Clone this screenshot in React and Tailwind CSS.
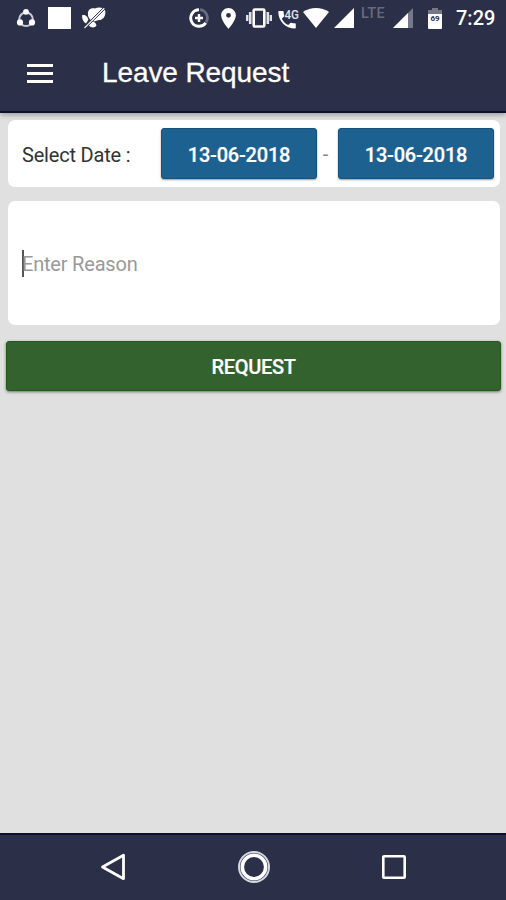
import React, { useState } from 'react';

const ShareIcon = () => (
  <svg className="ml-[16px] size-5 shrink-0" viewBox="0 0 20 20" fill="none">
    <circle cx="10" cy="11.3" r="6.800" stroke="#c9cad6" strokeWidth="2" />
    <circle cx="10" cy="3.800" r="2.900" fill="#fff" />
    <circle cx="4" cy="14.400" r="3.100" fill="#fff" />
    <circle cx="16" cy="14.400" r="3.100" fill="#fff" />
  </svg>
);

const SlashedLeafIcon = () => (
  <svg className="ml-[11px] h-[22px] w-[24px] shrink-0" viewBox="0 0 24 22" fill="none">
    <path d="M6 6C6 2.500 9.500 .5 13 1.500C16 -.2 22.500 .3 23.300 4C24 9 21 13 17 13L12 14.500C8 13.500 5.500 10 6 6Z" fill="#fff" />
    <path d="M0 8.500C2.500 7 6 9.500 6.300 13L4 16.500C1.500 15 0 12.500 0 8.500Z" fill="#fff" />
    <path d="M8 16C10.500 13.500 14 15 14.500 18.500C13 21 9.500 21 7 18.800Z" fill="#fff" />
    <path d="M2 20L21 1M3.800 21L23 2" stroke="#2b2f48" strokeWidth="1" />
    <path d="M2.500 21L22.300 1.200" stroke="#e4e4ea" strokeWidth="1.300" />
  </svg>
);

const DataSaverIcon = () => (
  <svg className="ml-auto size-5 shrink-0" viewBox="0 0 20 20" fill="none">
    <path d="M11 1.700A8.300 8.300 0 0 1 17.200 14.200" stroke="#6b6d80" strokeWidth="2.800" />
    <path d="M10 1.700A8.300 8.300 0 1 0 16.800 14.800" stroke="#fff" strokeWidth="2.900" />
    <path d="M10 6V14M6 10H14" stroke="#fff" strokeWidth="2.500" />
  </svg>
);

const PinIcon = () => (
  <svg className="ml-[12px] h-[21px] w-[15px] shrink-0" viewBox="0 0 14 20" fill="#fff">
    <path fillRule="evenodd" d="M7 0C3.130 0 0 3.130 0 7c0 5.250 7 13 7 13s7-7.750 7-13c0-3.870-3.130-7-7-7zm0 9.300a2.300 2.300 0 1 1 0-4.600 2.300 2.300 0 0 1 0 4.600z" />
  </svg>
);

const VibrateIcon = () => (
  <svg className="ml-[10px] h-5 w-[26px] shrink-0" viewBox="0 0 26 20" fill="none">
    <rect x="7.700" y="1.500" width="10.600" height="17" rx="1" stroke="#fff" strokeWidth="2.600" />
    <path d="M4.200 4V16M21.800 4V16" stroke="#e1e1e8" strokeWidth="2.600" />
    <path d="M1.200 7V13M24.800 7V13" stroke="#e1e1e8" strokeWidth="2.400" />
  </svg>
);

const Phone4GIcon = () => (
  <svg className="ml-[5px] h-[22px] w-[24px] shrink-0 overflow-visible" viewBox="0 0 24 22">
    <path transform="translate(-1.600 1.200) scale(.97)" d="M6.620 10.790c1.440 2.830 3.760 5.140 6.590 6.590l2.200-2.200c.27-.27.670-.36 1.020-.24 1.120.37 2.330.57 3.570.57.550 0 1 .450 1 1V20c0 .550-.450 1-1 1C10.610 21 3 13.390 3 4c0-.550.450-1 1-1h3.500c.550 0 1 .450 1 1 0 1.250.2 2.450.570 3.570.110.350.030.740-.250 1.020l-2.200 2.200z" fill="#fff" />
    <text x="7.500" y="11.500" fill="#e4e4ea" fontFamily="Roboto, sans-serif" fontSize="13" fontWeight="500" textLength="14.500" lengthAdjust="spacingAndGlyphs">4G</text>
  </svg>
);

const WifiIcon = () => (
  <svg className="ml-[2px] h-[20px] w-[26px] shrink-0" viewBox="0 0 26 20" fill="#fff">
    <path d="M13 20L0 4C7.500-1.300 18.500-1.300 26 4Z" />
  </svg>
);

const SignalIcon = () => (
  <svg className="ml-[5px] size-5 shrink-0" viewBox="0 0 20 20" fill="#fff">
    <path d="M0 20L20 0V20Z" />
  </svg>
);

const WeakSignalIcon = () => (
  <svg className="ml-[7px] size-5 shrink-0" viewBox="0 0 20 20">
    <path d="M0 20L20 0V20Z" fill="#76788a" />
    <path d="M0 20L15 5V20Z" fill="#fff" />
  </svg>
);

const BatteryIcon = () => (
  <svg className="ml-[15px] h-[21px] w-[14px] shrink-0" viewBox="0 0 14 21">
    <path d="M4 0H10V2H14V7H0V2H4Z" fill="#76788a" />
    <path d="M0 6H14V20Q14 21 13 21H1Q0 21 0 20Z" fill="#fff" />
    <text x="2.500" y="13" fill="#2b2f48" fontFamily="Roboto, sans-serif" fontSize="8" fontWeight="700">69</text>
  </svg>
);

const StatusBar = () => (
  <div className="flex h-9 items-center pr-[11px] text-white">
    <ShareIcon />
    <div className="ml-[12px] h-[22px] w-[23px] shrink-0 bg-white" />
    <SlashedLeafIcon />
    <DataSaverIcon />
    <PinIcon />
    <VibrateIcon />
    <Phone4GIcon />
    <WifiIcon />
    <SignalIcon />
    <span className="-mt-[7px] ml-[7px] w-[25px] text-[14.500px] leading-none font-medium tracking-[0.3px] text-[#676a7d]">LTE</span>
    <WeakSignalIcon />
    <BatteryIcon />
    <span className="ml-[14px] w-[39px] text-[20px] leading-none font-medium">7:29</span>
  </div>
);

const Toolbar = () => (
  <div className="flex h-[76px] items-center pb-[2px]">
    <button className="ml-[27px] flex w-[26px] flex-col gap-[5px]" aria-label="Menu">
      <span className="h-[3px] bg-white" />
      <span className="h-[3px] bg-white" />
      <span className="h-[3px] bg-white" />
    </button>
    <h1 className="ml-[49px] font-['Liberation_Sans',sans-serif] text-[28px] leading-none tracking-[-0.100px] text-white [-webkit-text-stroke:0.3px_white]">
      Leave Request
    </h1>
  </div>
);

const DateButton = ({ date }) => (
  <button className="h-[51px] w-[156px] rounded-[3px] border border-[#15537f] bg-[#1d6190] pt-[2px] text-[20px] font-medium tracking-[-0.200px] text-white shadow-[0_1px_2px_rgba(0,0,0,0.4)] [-webkit-text-stroke:0.2px_white]">
    {date}
  </button>
);

const NavBar = () => (
  <div className="flex h-[67px] items-center justify-between border-t-2 border-[#0c0e32] bg-[#2b2f48] pr-[98px] pb-[2px] pl-[100px]">
    <svg className="h-[30px] w-[27px]" viewBox="0 0 27 30" fill="none">
      <path d="M2.500 15L23.500 3.300V26.700Z" stroke="#fff" strokeWidth="2.800" strokeLinejoin="round" />
    </svg>
    <svg className="size-[34px]" viewBox="0 0 34 34" fill="none">
      <circle cx="17" cy="17" r="15" stroke="#d6d7df" strokeWidth="2" />
      <circle cx="17" cy="17" r="11.700" stroke="#fff" strokeWidth="3.600" />
    </svg>
    <svg className="size-[28px]" viewBox="0 0 28 28" fill="none">
      <rect x="3.300" y="3.300" width="21.400" height="21.400" rx=".8" stroke="#fff" strokeWidth="2.600" />
    </svg>
  </div>
);

const App = () => {
  const [fromDate] = useState('13-06-2018');
  const [toDate] = useState('13-06-2018');

  return (
    <div className="flex h-[900px] w-[506px] flex-col overflow-hidden bg-[#e0e0e0] font-[Roboto,sans-serif]">
      <header className="h-[113px] shrink-0 border-b-2 border-[#0c0e32] bg-[#2b2f48] shadow-[0_2px_5px_rgba(0,0,0,0.3)]">
        <StatusBar />
        <Toolbar />
      </header>

      <main className="flex-1 pt-[7px]">
        <div className="mr-[6px] ml-[8px] flex h-[67px] items-center rounded-[7px] bg-white pr-[6px] pl-[14px]">
          <span className="pt-[2px] text-[20px] tracking-[-0.200px] text-[#333]">Select Date :</span>
          <div className="ml-auto flex items-center">
            <DateButton date={fromDate} />
            <span className="w-[21px] pr-[4px] text-center text-[20px] text-[#888]">-</span>
            <DateButton date={toDate} />
          </div>
        </div>

        <div className="mt-[14px] mr-[6px] ml-[8px] flex h-[124px] items-center rounded-[7px] bg-white pl-[14px]">
          <span className="h-[27px] w-[2px] bg-[#555]" />
          <span className="-ml-[2px] pt-[2px] text-[20px] tracking-[-0.200px] text-[#999]">Enter Reason</span>
        </div>

        <button className="mt-[16px] mr-[5px] ml-[6px] block h-[50px] w-[495px] rounded-[3px] border border-[#235a1c] bg-[#34622f] pt-[2px] text-[20px] font-medium tracking-[-0.300px] text-white shadow-[0_1px_3px_rgba(0,0,0,0.5)] [-webkit-text-stroke:0.2px_white]">
          REQUEST
        </button>
      </main>

      <NavBar />
    </div>
  );
};

export default App;
